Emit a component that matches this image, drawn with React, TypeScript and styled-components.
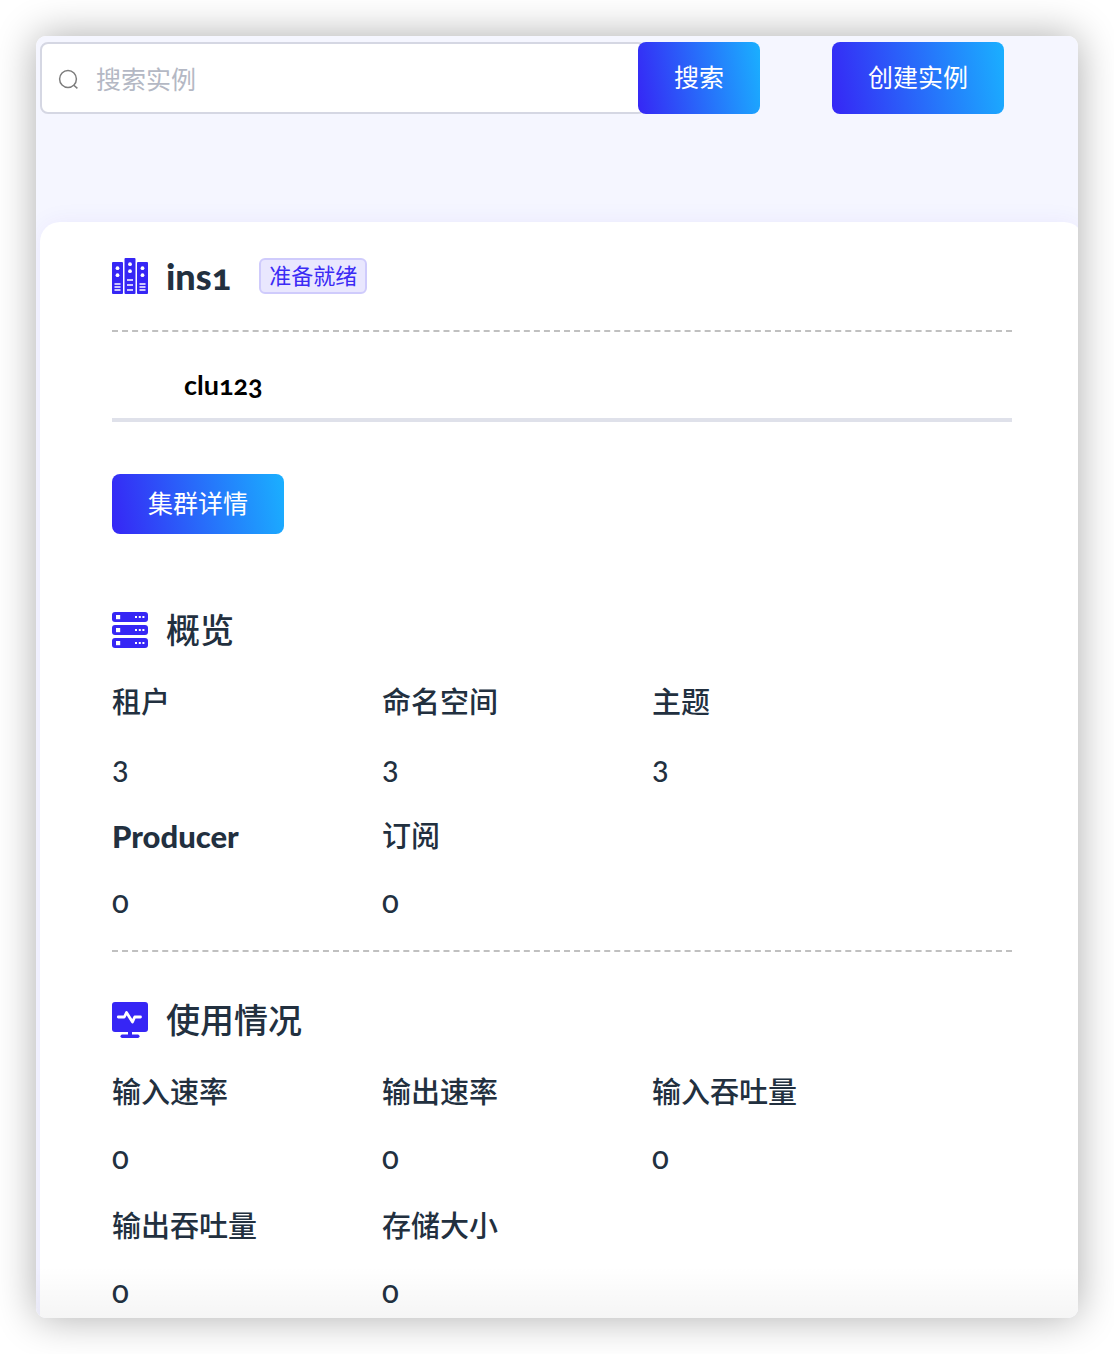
import React from "react";
import styled, { createGlobalStyle } from "styled-components";

const GlobalStyle = createGlobalStyle`
  *, *::before, *::after { box-sizing: border-box; }
  body {
    margin: 0;
    background: #ffffff;
    color: #22303f;
    font-family: Lato, "Noto Sans CJK SC", sans-serif;
    font-variant-numeric: oldstyle-nums;
  }
  h2, dl, dt, dd { margin: 0; font: inherit; font-variant-numeric: inherit; }
`;

const Page = styled.div`
  padding: 36px;
`;

const Frame = styled.main`
  position: relative;
  overflow: hidden;
  padding: 6px 0 0 4px;
  border-radius: 10px;
  background: #f5f6ff;
`;

const Shadow = styled.div`
  border-radius: 10px;
  box-shadow: 0 0 40px rgba(0, 0, 0, 0.33);
`;

const BottomFade = styled.div`
  position: absolute;
  inset: auto 0 0 0;
  height: 52px;
  background: linear-gradient(rgba(0, 0, 0, 0), rgba(0, 0, 0, 0.04));
  pointer-events: none;
`;

const Toolbar = styled.div`
  display: flex;
  gap: 72px;
  padding-right: 74px;
  margin-bottom: 108px;
`;

const SearchForm = styled.form`
  display: flex;
  flex: 1;
`;

const SearchBox = styled.label`
  display: flex;
  flex: 1;
  align-items: center;
  gap: 16px;
  height: 72px;
  margin-right: -8px;
  padding: 2px 16px 0;
  border: 2px solid #d5d7e3;
  border-radius: 8px;
  background: #ffffff;
`;

const SearchInput = styled.input`
  flex: 1;
  min-width: 0;
  padding: 0;
  border: 0;
  outline: 0;
  background: transparent;
  color: inherit;
  font-family: inherit;
  font-size: 25px;
  line-height: 36px;
  &::placeholder { color: #b4b8c4; opacity: 1; }
`;

const Button = styled.button<{ $height: number }>`
  position: relative;
  flex: none;
  height: ${(p) => p.$height}px;
  padding: 0 36px 2px;
  border: 0;
  border-radius: 8px;
  background: linear-gradient(80deg, #3626f5, #1ab0ff);
  color: #ffffff;
  font-family: inherit;
  font-size: 25px;
  line-height: 36px;
  white-space: nowrap;
  cursor: pointer;
`;

const Card = styled.section`
  margin-right: -6px;
  padding: 36px 72px 6px;
  border-radius: 20px 20px 0 0;
  background: #ffffff;
  box-shadow: 0 0 24px rgba(60, 20, 240, 0.06);
`;

const Heading = styled.div<{ $top: number }>`
  display: flex;
  align-items: center;
  height: 36px;
  margin-top: ${(p) => p.$top}px;
`;

const Title = styled.h2`
  && {
    margin-left: 18px;
    font-size: 34px;
    font-weight: 500;
    line-height: 36px;
  }
`;

const InstanceTitle = styled(Title)`
  &&& {
    font-size: 36px;
    font-weight: 900;
  }
`;

const Tag = styled.span`
  height: 36px;
  margin-left: 28px;
  padding: 0 8px;
  border: 2px solid #cfcbfc;
  border-radius: 6px;
  background: #e9e7fe;
  color: #3b2bf5;
  font-size: 22px;
  line-height: 32px;
`;

const Divider = styled.hr<{ $top: number }>`
  height: 0;
  margin: ${(p) => p.$top}px 0 0;
  border: 0;
  border-top: 2px dashed #c0c0c0;
`;

const Tabs = styled.div`
  display: flex;
  margin: 35px 0 52px;
  padding: 0 72px 15px;
  border-bottom: 4px solid #dfe1ea;
`;

const Tab = styled.button`
  padding: 0;
  border: 0;
  background: none;
  color: #000000;
  font-family: inherit;
  font-size: 27px;
  font-variant-numeric: inherit;
  font-weight: 700;
  line-height: 36px;
`;

const Stats = styled.dl`
  && {
    display: grid;
    grid-template-columns: repeat(3, 30%);
    row-gap: 30px;
    margin-top: 36px;
    font-size: 29px;
    line-height: 36px;
  }
`;

const StatLabel = styled.dt`
  && {
    height: 36px;
    font-weight: 500;
  }
`;

const LatinLabel = styled.strong`
  font-size: 31px;
  font-weight: 900;
`;

const StatValue = styled.dd`
  && {
    margin: 29px 0 3px;
    font-size: 31px;
    font-weight: 500;
  }
`;

const SearchIcon = () => (
  <svg width="22" height="22" viewBox="0 0 22 22" fill="none" stroke="#7d7d7d" strokeWidth="1.5" aria-hidden="true">
    <circle cx="10" cy="11" r="8.4" />
    <path d="M15.8 17.2l3.6 3.2" />
  </svg>
);

const ClusterIcon = () => (
  <svg width="36" height="36" viewBox="0 0 36 36" fill="#3626f5" aria-hidden="true">
    {[[0, 4], [12.5, 0], [25, 4]].map(([x, y]) => (
      <g key={x}>
        <rect x={x} y={y} width="11" height={36 - y} rx="1" />
        <g fill="#ffffff">
          <circle cx={x + 5.5} cy={y + 6.2} r="1.9" />
          <circle cx={x + 5.5} cy={y + 13.2} r="1.9" />
        </g>
        <g fill="#cdc8fd">
          <rect x={x + 2.5} y={y ? 25 : 21} width="6" height="2" />
          <rect x={x + 2.5} y={y ? 28 : 26} width="6" height="2" />
          <rect x={x + 2.5} y="31" width="6" height="2" />
        </g>
      </g>
    ))}
  </svg>
);

const ServerIcon = () => (
  <svg width="36" height="36" viewBox="0 0 36 36" fill="#3626f5" aria-hidden="true">
    {[0, 13, 26].map((y) => (
      <g key={y}>
        <rect y={y} width="36" height="10" rx="3" />
        <g fill="#ffffff">
          <rect x="4" y={y + 3} width="4.2" height="4.2" />
          <rect x="23" y={y + 4} width="2" height="2" />
          <rect x="26.8" y={y + 4} width="2" height="2" />
          <rect x="30.4" y={y + 4} width="2" height="2" />
        </g>
      </g>
    ))}
  </svg>
);

const MonitorIcon = () => (
  <svg width="36" height="36" viewBox="0 0 36 36" fill="#3626f5" aria-hidden="true">
    <rect width="36" height="30" rx="3" />
    <rect x="16" y="30" width="4" height="4" />
    <rect x="8.5" y="32.5" width="19" height="3.5" rx="1.7" />
    <path d="M6.3 15h6l2.2-4.5 6 9.5 2.2-5h5.8" fill="none" stroke="#ffffff" strokeWidth="2.8" strokeLinecap="round" strokeLinejoin="round" />
  </svg>
);

type Stat = { label: React.ReactNode; value: number };

const overview: Stat[] = [
  { label: "租户", value: 3 },
  { label: "命名空间", value: 3 },
  { label: "主题", value: 3 },
  { label: <LatinLabel>Producer</LatinLabel>, value: 0 },
  { label: "订阅", value: 0 },
];

const usage: Stat[] = [
  { label: "输入速率", value: 0 },
  { label: "输出速率", value: 0 },
  { label: "输入吞吐量", value: 0 },
  { label: "输出吞吐量", value: 0 },
  { label: "存储大小", value: 0 },
];

const StatGrid = ({ items }: { items: Stat[] }) => (
  <Stats>
    {items.map((item, i) => (
      <div key={i}>
        <StatLabel>{item.label}</StatLabel>
        <StatValue>{item.value}</StatValue>
      </div>
    ))}
  </Stats>
);

export default function App() {
  return (
    <Page>
      <GlobalStyle />
      <Shadow>
        <Frame>
          <Toolbar>
            <SearchForm onSubmit={(e) => e.preventDefault()}>
              <SearchBox>
                <SearchIcon />
                <SearchInput type="text" placeholder="搜索实例" aria-label="搜索实例" />
              </SearchBox>
              <Button type="submit" $height={72}>搜索</Button>
            </SearchForm>
            <Button type="button" $height={72}>创建实例</Button>
          </Toolbar>
          <Card>
            <Heading $top={0}>
              <ClusterIcon />
              <InstanceTitle>ins1</InstanceTitle>
              <Tag>准备就绪</Tag>
            </Heading>
            <Divider $top={36} />
            <Tabs>
              <Tab type="button">clu123</Tab>
            </Tabs>
            <Button type="button" $height={60}>集群详情</Button>
            <Heading $top={78}>
              <ServerIcon />
              <Title>概览</Title>
            </Heading>
            <StatGrid items={overview} />
            <Divider $top={28} />
            <Heading $top={50}>
              <MonitorIcon />
              <Title>使用情况</Title>
            </Heading>
            <StatGrid items={usage} />
          </Card>
          <BottomFade />
        </Frame>
      </Shadow>
    </Page>
  );
}
